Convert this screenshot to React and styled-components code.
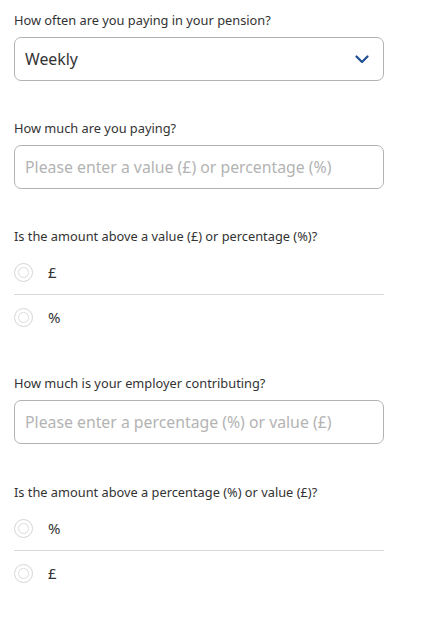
import React from "react";
import styled, { createGlobalStyle } from "styled-components";

const GlobalStyle = createGlobalStyle`
  body {
    margin: 0;
    background: #fff;
    font-family: "Noto Sans", "Lato", sans-serif;
  }
`;

const Form = styled.div`
  width: 370px;
  padding: 12px 0 0 14px;
  display: flex;
  flex-direction: column;
`;

const Field = styled.div`
  display: flex;
  flex-direction: column;
  margin-bottom: ${(p) => p.gap || 39}px;
`;

const Label = styled.div`
  font-size: 12.8px;
  color: #333;
  line-height: 16px;
  margin-bottom: 9px;
`;

const Box = styled.div`
  box-sizing: border-box;
  height: 44px;
  border: 1px solid #b3b3b3;
  border-radius: 7px;
  display: flex;
  align-items: center;
  justify-content: space-between;
  padding: 0 14px 0 10px;
  font-size: 15.8px;
  color: ${(p) => (p.placeholder ? "#b3b3b3" : "#333")};
`;

const Options = styled.div`
  display: flex;
  flex-direction: column;
  margin-top: -3px;
`;

const Option = styled.div`
  display: flex;
  align-items: center;
  height: 44px;
  border-top: ${(p) => (p.first ? "none" : "1px solid #d9d9d9")};
  font-size: 15px;
  color: #333;
`;

const Radio = styled.span`
  width: 17px;
  height: 17px;
  border: 1px solid #d6d6d6;
  border-radius: 50%;
  margin-right: 15px;
  display: flex;
  align-items: center;
  justify-content: center;

  &::after {
    content: "";
    width: 9px;
    height: 9px;
    border: 1px solid #dcdcdc;
    border-radius: 50%;
  }
`;

const Chevron = () => (
  <svg width="14" height="9" viewBox="0 0 14 9">
    <path d="M1.5 1.5 L7 7 L12.5 1.5" fill="none" stroke="#1d4f91" strokeWidth="2.2" strokeLinecap="round" strokeLinejoin="round" />
  </svg>
);

function RadioGroup({ options }) {
  return (
    <Options>
      {options.map((o, i) => (
        <Option key={o} first={i === 0}>
          <Radio />
          {o}
        </Option>
      ))}
    </Options>
  );
}

export default function App() {
  return (
    <>
      <GlobalStyle />
      <Form>
        <Field gap={39}>
          <Label>How often are you paying in your pension?</Label>
          <Box>
            Weekly
            <Chevron />
          </Box>
        </Field>
        <Field gap={39}>
          <Label>How much are you paying?</Label>
          <Box placeholder>Please enter a value (£) or percentage (%)</Box>
        </Field>
        <Field gap={36}>
          <Label>Is the amount above a value (£) or percentage (%)?</Label>
          <RadioGroup options={["£", "%"]} />
        </Field>
        <Field gap={40}>
          <Label>How much is your employer contributing?</Label>
          <Box placeholder>Please enter a percentage (%) or value (£)</Box>
        </Field>
        <Field>
          <Label>Is the amount above a percentage (%) or value (£)?</Label>
          <RadioGroup options={["%", "£"]} />
        </Field>
      </Form>
    </>
  );
}
